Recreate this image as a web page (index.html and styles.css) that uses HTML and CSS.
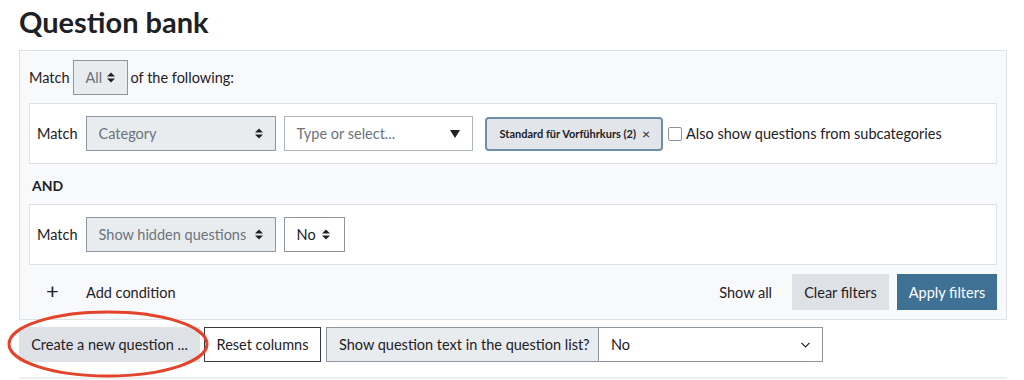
FILE: index.html
```html
<!DOCTYPE html>
<html lang="en">
<head>
  <meta charset="UTF-8">
  <title>Question bank</title>
  <link rel="stylesheet" href="styles.css">
</head>
<body>
  <div class="page">
    <h1>Question bank</h1>

    <!-- Filter conditions -->
    <div class="filters">
      <div class="match-row">
        <span>Match</span>
        <span class="select select-grey select-all">All
          <svg class="updown" width="8" height="11" viewBox="0 0 8 11"><polygon points="0,4.5 4,0.5 8,4.5"/><polygon points="0,6.5 4,10.5 8,6.5"/></svg>
        </span>
        <span>of the following:</span>
      </div>

      <div class="condition">
        <span>Match</span>
        <span class="select select-grey select-wide">Category
          <svg class="updown" width="8" height="11" viewBox="0 0 8 11"><polygon points="0,4.5 4,0.5 8,4.5"/><polygon points="0,6.5 4,10.5 8,6.5"/></svg>
        </span>
        <span class="select select-type">Type or select...
          <svg class="down" width="10" height="8" viewBox="0 0 10 8"><polygon points="0,0 10,0 5,8"/></svg>
        </span>
        <span class="chip">Standard für Vorführkurs (2) <span class="chip-x">×</span></span>
        <label class="check"><span class="box"></span>Also show questions from subcategories</label>
      </div>

      <div class="and-label">AND</div>

      <div class="condition">
        <span>Match</span>
        <span class="select select-grey select-wide">Show hidden questions
          <svg class="updown" width="8" height="11" viewBox="0 0 8 11"><polygon points="0,4.5 4,0.5 8,4.5"/><polygon points="0,6.5 4,10.5 8,6.5"/></svg>
        </span>
        <span class="select select-no">No
          <svg class="updown" width="8" height="11" viewBox="0 0 8 11"><polygon points="0,4.5 4,0.5 8,4.5"/><polygon points="0,6.5 4,10.5 8,6.5"/></svg>
        </span>
      </div>

      <div class="filter-actions">
        <span class="add-condition"><span class="plus">+</span>Add condition</span>
        <span class="show-all">Show all</span>
        <button class="btn btn-secondary">Clear filters</button>
        <button class="btn btn-primary">Apply filters</button>
      </div>
    </div>

    <!-- Question list controls -->
    <div class="list-controls">
      <div class="create-wrap">
        <button class="btn btn-secondary btn-create">Create a new question ...</button>
        <svg class="highlight" width="204" height="70" viewBox="0 0 204 70"><ellipse cx="102" cy="35" rx="99" ry="32"/></svg>
      </div>
      <button class="btn btn-outline">Reset columns</button>
      <div class="input-group">
        <span class="group-label">Show question text in the question list?</span>
        <span class="select select-show">No
          <svg class="chev" width="9" height="6" viewBox="0 0 9 6"><polyline points="0.5,0.8 4.5,4.8 8.5,0.8"/></svg>
        </span>
      </div>
    </div>

    <div class="rule"></div>
  </div>
</body>
</html>
```

FILE: styles.css
```css
/* Page basics */
body {
  margin: 0;
  font-family: 'Lato', 'Liberation Sans', sans-serif;
  font-size: 14.5px;
  color: #1d2125;
  background: #fff;
}

.page {
  padding: 0 17px 0 19px;
}

h1 {
  margin: 0;
  padding-top: 2px;
  font-size: 29px;
  line-height: 40px;
  font-weight: 700;
  height: 48px;
}

/* Filter box */
.filters {
  border: 1px solid #dee2e6;
  background-color: #f8f9fa;
  padding: 9px;
}

.match-row {
  display: flex;
  align-items: center;
  gap: 3px;
  height: 35px;
}

.condition {
  display: flex;
  align-items: center;
  gap: 8px;
  margin-top: 8px;
  padding: 12px 7px;
  background: #fff;
  border: 1px solid #dee2e6;
}

.and-label {
  font-weight: 700;
  font-size: 14px;
  line-height: 20px;
  padding: 12px 3px 0;
}

/* Fake selects */
.select {
  display: inline-flex;
  align-items: center;
  justify-content: space-between;
  flex-shrink: 0;
  box-sizing: border-box;
  height: 35px;
  padding: 0 12px;
  border: 1px solid #8f959e;
  background: #fff;
  color: #1d2125;
  white-space: nowrap;
}

.select-grey {
  background-color: #e9ecef;
  color: #6a737b;
}

.select-all {
  width: 55px;
}

.select-wide {
  width: 190px;
}

.select-type {
  width: 189px;
  color: #6a737b;
  border-color: #adb5bd;
}

.select-no {
  width: 61px;
}

.updown polygon,
.down polygon {
  fill: #1d2125;
}

.select-no .updown {
  margin-right: 2px;
}

.chip {
  display: inline-flex;
  align-items: center;
  flex-shrink: 0;
  height: 34px;
  box-sizing: border-box;
  margin-left: 4px;
  padding: 0 11px 0 13px;
  background: #e2e6ea;
  border: 2px solid #6e8fa8;
  border-radius: 4px;
  font-size: 11px;
  font-weight: 700;
  gap: 6px;
  white-space: nowrap;
}

.chip-x {
  font-weight: 400;
  font-size: 14px;
}

.check {
  display: inline-flex;
  align-items: center;
  gap: 4px;
  margin-left: -3px;
  white-space: nowrap;
}

.check .box {
  width: 12px;
  height: 12px;
  border: 1px solid #8f959e;
  border-radius: 2px;
  background: #fff;
}

/* Filter buttons row */
.filter-actions {
  display: flex;
  align-items: center;
  margin-top: 9px;
  height: 36px;
}

.add-condition {
  display: flex;
  align-items: center;
  margin-left: 17px;
  flex: 1;
}

.plus {
  font-size: 22px;
  width: 40px;
  line-height: 20px;
  margin-top: -2px;
}

.show-all {
  margin-right: 20px;
}

.btn {
  font-family: inherit;
  font-size: 14.5px;
  height: 36px;
  padding: 0 13px;
  border: 1px solid transparent;
  border-radius: 0;
  color: #1d2125;
  white-space: nowrap;
  cursor: pointer;
}

.btn-secondary {
  background-color: #dee2e6;
}

.btn-primary {
  background-color: #3f7194;
  color: #fff;
  margin-left: 8px;
  width: 100px;
  padding: 0;
}

.filter-actions .btn-secondary {
  width: 97px;
  padding: 0;
}

/* Controls under the filter */
.list-controls {
  display: flex;
  align-items: center;
  margin-top: 7px;
  height: 35px;
}

.create-wrap {
  position: relative;
}

.btn-create {
  width: 181px;
  height: 35px;
  padding: 0;
}

.highlight {
  position: absolute;
  left: -13px;
  top: -18px;
  pointer-events: none;
}

.highlight ellipse {
  fill: none;
  stroke: #e3432a;
  stroke-width: 3;
}

.btn-outline {
  background: #fff;
  border-color: #343a40;
  height: 35px;
  width: 117px;
  padding: 0;
  margin-left: 4px;
}

.input-group {
  display: flex;
  margin-left: 5px;
}

.group-label {
  display: inline-flex;
  align-items: center;
  box-sizing: border-box;
  height: 35px;
  width: 273px;
  padding: 0 12px;
  background: #e9ecef;
  border: 1px solid #8f959e;
  white-space: nowrap;
}

.select-show {
  width: 224px;
  border-left: none;
}

.chev polyline {
  fill: none;
  stroke: #1d2125;
  stroke-width: 1.2;
}

.rule {
  margin-top: 15px;
  border-top: 2px solid #eceef0;
}
```
